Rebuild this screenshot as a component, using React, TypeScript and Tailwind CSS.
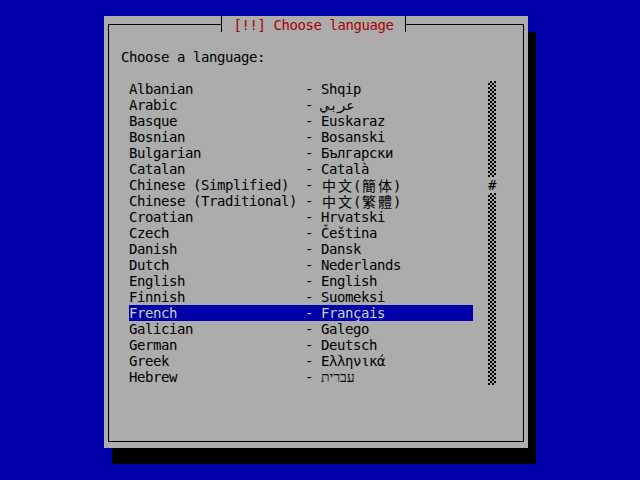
const LANGS: [string, string][] = [
  ["Albanian", "Shqip"],
  ["Arabic", "عربي"],
  ["Basque", "Euskaraz"],
  ["Bosnian", "Bosanski"],
  ["Bulgarian", "Български"],
  ["Catalan", "Català"],
  ["Chinese (Simplified)", "中文(簡体)"],
  ["Chinese (Traditional)", "中文(繁體)"],
  ["Croatian", "Hrvatski"],
  ["Czech", "Čeština"],
  ["Danish", "Dansk"],
  ["Dutch", "Nederlands"],
  ["English", "English"],
  ["Finnish", "Suomeksi"],
  ["French", "Français"],
  ["Galician", "Galego"],
  ["German", "Deutsch"],
  ["Greek", "Ελληνικά"],
  ["Hebrew", "עברית"],
];

const SELECTED = "French";
const THUMB_ROW = 6;

// console cells are 8x16; CJK glyphs take two cells
function Cells({ text }: { text: string }) {
  if (/[\u0590-\u06ff]/.test(text)) {
    return <span className="tracking-normal">{text}</span>;
  }
  return (
    <>
      {Array.from(text).map((ch, i) =>
        /[\u4e00-\u9fff]/.test(ch) ? (
          <span
            key={i}
            className="inline-block w-4 text-center font-['Noto_Sans_CJK_TC','Noto_Sans_CJK_SC',sans-serif] text-[14px] tracking-normal"
          >
            {ch}
          </span>
        ) : (
          <span key={i}>{ch}</span>
        )
      )}
    </>
  );
}

function ScrollBar() {
  return (
    <div className="ml-[15px] flex w-2 flex-col">
      {LANGS.map((_, i) =>
        i === THUMB_ROW ? (
          <div key={i} className="h-4 text-center leading-4">
            #
          </div>
        ) : (
          <div
            key={i}
            className="h-4 bg-[conic-gradient(#000_25%,#aaa_0_50%,#000_0_75%,#aaa_0)] bg-[length:4px_4px]"
          />
        )
      )}
    </div>
  );
}

export default function App() {
  return (
    <div className="h-[480px] w-[640px] overflow-hidden bg-[#0000aa] pl-[104px] pt-4 font-['DejaVu_Sans_Mono',monospace] text-[14px] leading-4 tracking-[-0.43px] text-black">
      <div className="relative h-[432px] w-[424px] bg-[#acacac] px-1 pb-[6px] pt-2 shadow-[8px_16px_0_#000]">
        <div className="absolute left-[117px] top-0 flex h-4 w-[185px] justify-center border-x border-black bg-[#acacac] pt-px text-[#aa0000]">
          [!!] Choose language
        </div>
        <div className="h-full border border-black pl-[12px] pt-[24px]">
          <p className="h-4">Choose a language:</p>
          <div className="mt-4 flex pl-2">
            <div className="flex w-[344px] flex-col">
              {LANGS.map(([name, native]) => (
                <div
                  key={name}
                  className={`flex h-4 whitespace-pre ${
                    name === SELECTED ? "bg-[#0000aa] text-[#cfcfcf]" : ""
                  }`}
                >
                  <span className="w-[176px]">{name}</span>
                  <span className="w-4">-</span>
                  <span>
                    <Cells text={native} />
                  </span>
                </div>
              ))}
            </div>
            <ScrollBar />
          </div>
        </div>
      </div>
    </div>
  );
}
